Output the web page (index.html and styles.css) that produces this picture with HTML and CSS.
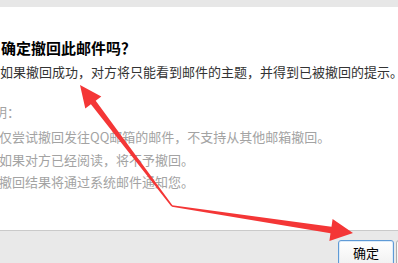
FILE: index.html
```html
<!DOCTYPE html>
<html lang="zh-CN">
<head>
<meta charset="utf-8">
<title>确定撤回此邮件吗？</title>
<link rel="stylesheet" href="styles.css">
</head>
<body>
<div class="dialog">
  <div class="topbar"></div>
  <div class="content">
    <h1 class="title">确定撤回此邮件吗？</h1>
    <p class="desc">如果撤回成功，对方将只能看到邮件的主题，并得到已被撤回的提示。</p>
    <p class="note-title">说明：</p>
    <ol class="note-list">
      <li>仅尝试撤回发往QQ邮箱的邮件，不支持从其他邮箱撤回。</li>
      <li>如果对方已经阅读，将不予撤回。</li>
      <li>撤回结果将通过系统邮件通知您。</li>
    </ol>
  </div>
  <div class="footer">
    <button class="btn btn-primary">确定</button>
    <button class="btn">取消</button>
  </div>
</div>
<svg class="arrows" width="398" height="263" viewBox="0 0 398 263">
  <polygon fill="#f43636" points="80,85 85.3,108.6 90.9,104.3 171.4,206.6 172.6,205.4 95.7,100.7 101.3,96.4"/>
  <polygon fill="#f43636" points="172.1,205.2 331.5,226.8 332.6,219.1 353,233 329.4,240.9 330.5,233.2 171.9,206.8"/>
</svg>
</body>
</html>
```

FILE: styles.css
```css
html, body {
  margin: 0;
  padding: 0;
  width: 398px;
  height: 263px;
  overflow: hidden;
  background: #fff;
}

body {
  position: relative;
  font-family: "Noto Sans CJK SC", sans-serif;
}

.dialog {
  display: flex;
  flex-direction: column;
  height: 263px;
}

.topbar {
  height: 7px;
  background: #e7e7e7;
  flex: none;
}

.content {
  height: 223px;
  padding-top: 31px;
  box-sizing: border-box;
  background: #fff;
  white-space: nowrap;
  flex: none;
}

.title {
  margin: 0 0 0 1px;
  font-size: 15px;
  line-height: 20px;
  font-weight: bold;
  color: #000;
}

.desc {
  margin: 4px 0 0 0;
  font-size: 13px;
  line-height: 20px;
  color: #333;
}

.note-title {
  margin: 19px 0 0 -19px;
  font-size: 13px;
  line-height: 22px;
  color: #a3a3a3;
}

.note-list {
  margin: 3px 0 0 -1px;
  padding: 0;
  font-size: 13px;
  line-height: 22.5px;
  color: #a3a3a3;
}

.footer {
  flex: 1;
  display: flex;
  justify-content: flex-end;
  align-items: flex-start;
  gap: 2px;
  margin-right: -60px;
  padding: 9px 6px 0 0;
  border-top: 1px solid #cacaca;
  background: #e9e9e9;
}

.btn {
  flex: none;
  width: 56px;
  height: 26px;
  padding: 0;
  font-family: "Noto Sans CJK SC", sans-serif;
  font-size: 13px;
  line-height: 24px;
  color: #000;
  background: linear-gradient(#ffffff, #f1f1f1);
  border: 1px solid #adadad;
  border-radius: 3px;
}

.btn-primary {
  border-color: #5f9ad6;
  box-shadow: inset 0 0 0 1px #dcebf9;
}

.arrows {
  position: absolute;
  left: 0;
  top: 0;
  pointer-events: none;
}
```
